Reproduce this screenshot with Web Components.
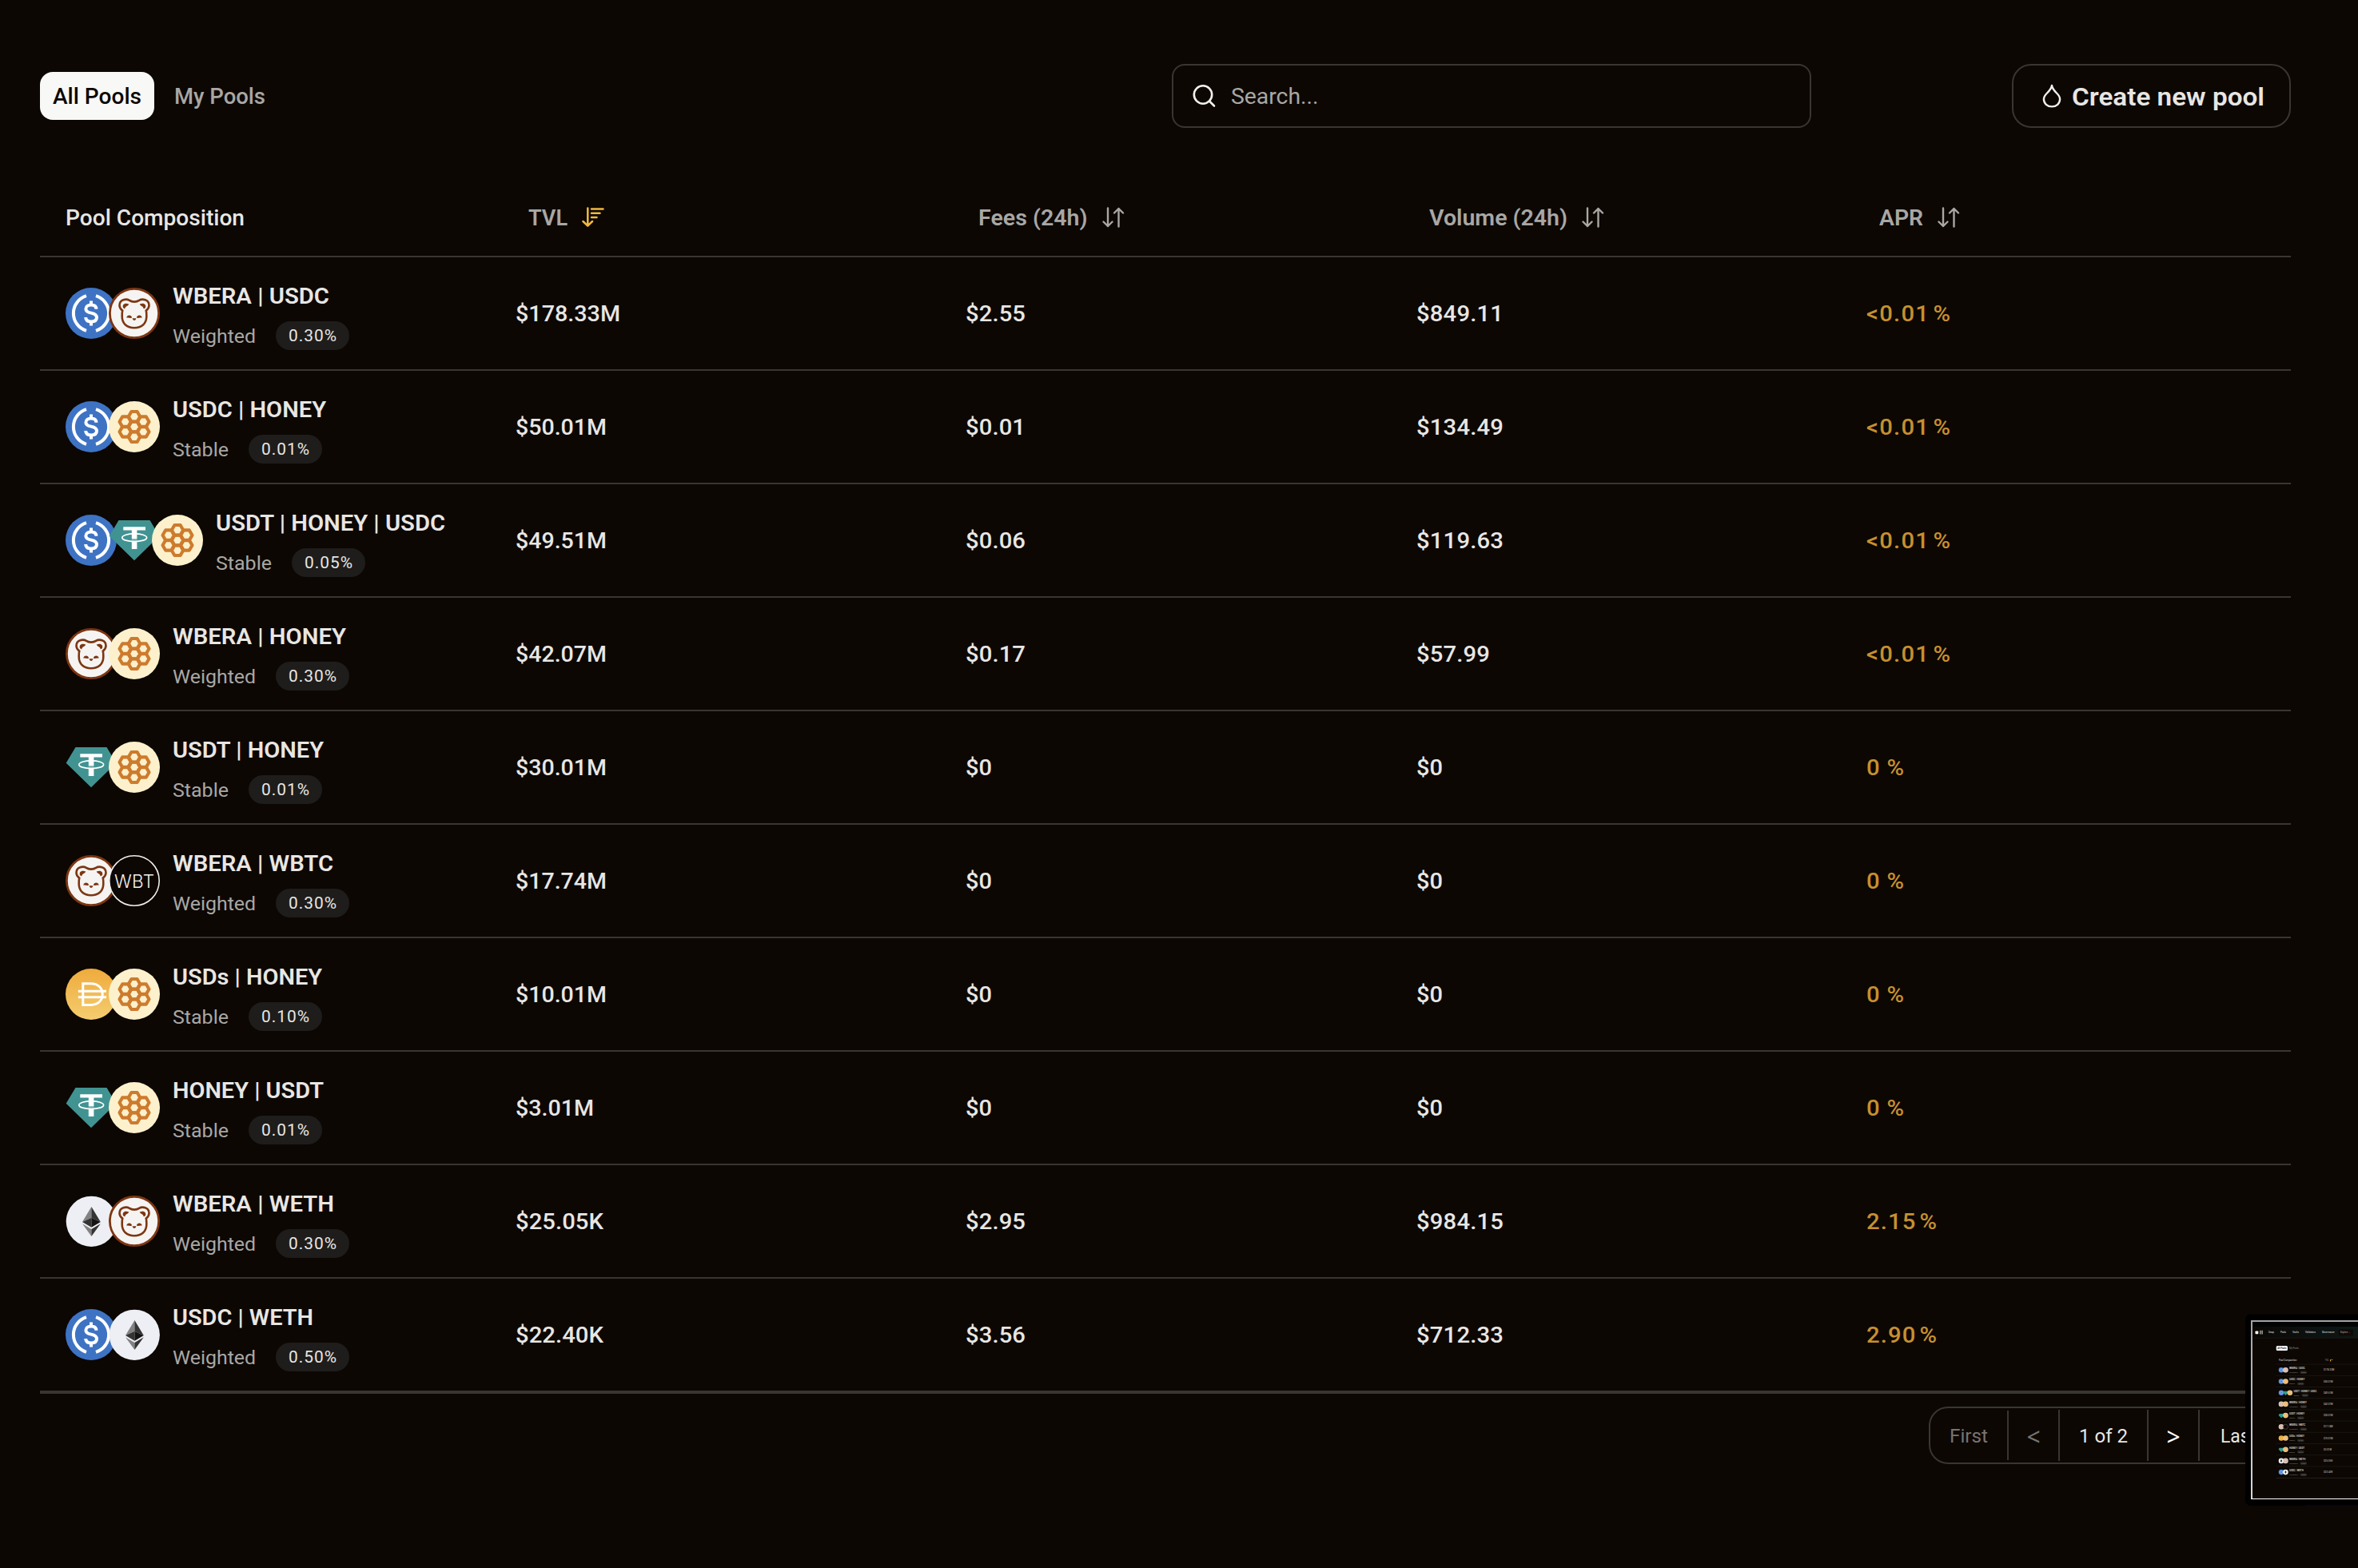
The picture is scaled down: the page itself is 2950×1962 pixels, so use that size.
<!DOCTYPE html>
<html lang="en">
<head>
<meta charset="utf-8">
<title>Pools</title>
<style>
  html, body { margin: 0; background: #0c0703; }
  body { width: 2950px; height: 1962px; overflow: hidden; font-family: Roboto, "Noto Sans", sans-serif; color: #e8e6e3; }
</style>
</head>
<body>
<pool-page></pool-page>
<script>
const fits = new Set();

/* Text widened slightly, then tracked, so that it spans a given width. */
class FitText extends HTMLElement {
  connectedCallback() {
    if (this.shadowRoot) return;
    this.attachShadow({ mode: 'open' }).innerHTML = `<style>:host{display:inline-block;white-space:nowrap;transform-origin:0 50%}</style><slot></slot>`;
    fits.add(this);
  }
  fit() {
    const w = parseFloat(this.getAttribute('w'));
    const n = this.textContent.length;
    const natural = this.getBoundingClientRect().width;
    const s = Math.min(1.06, Math.max(0.95, w / natural));
    const ls = (w / s - natural) / Math.max(1, n - 1);
    this.style.letterSpacing = ls.toFixed(3) + 'px';
    this.style.transform = `scaleX(${s.toFixed(4)})`;
    this.style.marginRight = (w - w / s - ls).toFixed(3) + 'px';
  }
}
customElements.define('fit-text', FitText);

function honeyCells() {
  const c = [[0,0],[0,-12.7],[0,12.7],[11.3,-6.35],[11.3,6.35],[-11.3,-6.35],[-11.3,6.35]];
  return c.map(([x, y]) => {
    const p = [];
    for (let i = 0; i < 6; i++) p.push((32 + x + 7.2 * Math.cos(i * Math.PI / 3)).toFixed(2) + ',' + (32 + y + 7.2 * Math.sin(i * Math.PI / 3)).toFixed(2));
    return `<polygon points="${p.join(' ')}"/>`;
  }).join('');
}
const ICONS = {
  usdc: `<circle cx="32" cy="32" r="32" fill="#3e73c4"/><g fill="none" stroke="#fff" stroke-width="4">
    <path d="M26 10.2A22.8 22.8 0 0 0 26 53.8M38 10.2A22.8 22.8 0 0 1 38 53.8"/>
    <path d="M38.4 26.8C38.3 23.4 35.8 21.6 32 21.6S25.4 23.4 25.4 26.4C25.4 29.6 28 30.8 32 31.6S39 34 39 37.3S36.3 42.4 32 42.4S25.3 40.4 25.2 37M32 16.5v5M32 42.4v5"/></g>`,
  honey: `<circle cx="32" cy="32" r="32" fill="#fcf1cc"/><g fill="none" stroke="#cd7b2e" stroke-width="4.1" stroke-linejoin="round">${honeyCells()}</g>`,
  bera: `<circle cx="32" cy="32" r="30.6" fill="#f5f4f2" stroke="#7d3612" stroke-width="2.8"/>
    <path d="M32 17.6C29.5 17.6 27.5 17 26 15.9C22 13.4 13.5 14.5 13.5 22C13.5 25 15 27 17.2 28.6C16.6 31 16.7 34 16.7 36C16.7 45 23 50.2 32 50.2S47.3 45 47.3 36C47.3 34 47.4 31 46.8 28.6C49 27 50.5 25 50.5 22C50.5 14.5 42 13.4 38 15.9C36.5 17 34.5 17.6 32 17.6Z" fill="none" stroke="#7d3612" stroke-width="2.6"/>
    <g fill="#7d3612"><path d="M18.2 25.2C16.2 21 20.5 18 25.2 20.6C25 22.8 20.8 23 20.2 26.4Z"/><path d="M45.8 25.2C47.8 21 43.5 18 38.8 20.6C39 22.8 43.2 23 43.8 26.4Z"/>
    <path d="M22.3 37.8C22.8 33.6 28.4 33.6 29.2 37.6C26.5 38.6 24.5 36.6 22.3 37.8Z"/><path d="M41.7 37.8C41.2 33.6 35.6 33.6 34.8 37.6C37.5 38.6 39.5 36.6 41.7 37.8Z"/>
    <path d="M29.6 38.2H34.4C34 40.2 33 40.9 32 40.9S30 40.2 29.6 38.2Z"/></g>`,
  usdt: `<path d="M12.5 7H51.5L63.3 26.7L32 57.3L.7 26.7Z" fill="#419392"/><path d="M18.3 15.3H46V19.4H35.4V43H28.8V19.4H18.3Z" fill="#fff"/>
    <path d="M28 33.8V30.2H36V33.8Z" fill="#419392" opacity=".75"/><ellipse cx="32.2" cy="28.7" rx="15.4" ry="4.9" fill="none" stroke="#fff" stroke-width="1.7"/>`,
  usds: `<defs><linearGradient id="g" x1="0" y1="0" x2="0" y2="1"><stop offset="0" stop-color="#efab3c"/><stop offset="1" stop-color="#f4cd70"/></linearGradient></defs>
    <circle cx="32" cy="32" r="32" fill="url(#g)"/><g fill="none" stroke="#fff" stroke-width="3"><path d="M21.8 18.7H31.5C41 18.7 46.2 24.5 46.2 32S41 45.4 31.5 45.4H21.8Z"/><path d="M15.8 28.3H51M15.8 35.7H51"/></g>`,
  weth: `<circle cx="32.3" cy="32.3" r="31.6" fill="#edeff4"/>
    <path d="M32.4 14L21 32.9L32.4 27.8Z" fill="#828282"/><path d="M32.4 14L43.8 32.9L32.4 27.8Z" fill="#343434"/>
    <path d="M21 32.9L32.4 27.8V39.7Z" fill="#343434"/><path d="M43.8 32.9L32.4 27.8V39.7Z" fill="#141414"/>
    <path d="M21 35.2L32.4 42V51Z" fill="#828282"/><path d="M43.8 35.2L32.4 42V51Z" fill="#343434"/>`,
  wbtc: `<circle cx="32" cy="32" r="31.2" fill="#0c0703" stroke="#f0eeeb" stroke-width="1.6"/><text x="32" y="40.6" text-anchor="middle" textLength="50" font-family="Inter" font-size="22.5" font-weight="300" fill="#f0eeeb">WBT</text>`
};

class TokenIcon extends HTMLElement {
  connectedCallback() {
    if (this.shadowRoot) return;
    this.attachShadow({ mode: 'open' }).innerHTML = `<style>:host{display:block;width:64px;height:64px;flex:none}svg{display:block}</style>
      <svg width="64" height="64" viewBox="0 0 64 64">${ICONS[this.getAttribute('name')]}</svg>`;
  }
}
customElements.define('token-icon', TokenIcon);

class PoolHeader extends HTMLElement {
  connectedCallback() {
    this.attachShadow({ mode: 'open' }).innerHTML = `<style>
      :host{display:flex;align-items:center;height:80px;font-size:28px;font-weight:500}
      .tab{box-sizing:border-box;height:60px;line-height:62px;border-radius:16px;padding:0 16px;color:#a9a7a4}
      .tab.on{width:143px;background:#f8f8f6;color:#0c0703;margin-right:8.5px}
      .search{box-sizing:border-box;width:800px;height:80px;border:2px solid #393532;border-radius:16px;margin:0 251px 0 auto;display:flex;align-items:center;padding-left:24px;gap:18.5px;color:#a9a7a4;font-weight:400}
      button{box-sizing:border-box;width:349px;height:80px;border:2px solid #393532;border-radius:24px;background:none;padding:0 0 0 35px;display:flex;align-items:center;gap:11.500px;color:#e8e6e3;font:600 31.5px Roboto,sans-serif}
      button fit-text{position:relative;top:1px}
      svg{flex:none;fill:none;stroke:#f2f0ed}
    </style>
    <div class="tab on"><fit-text w="111">All Pools</fit-text></div><div class="tab"><fit-text w="114">My Pools</fit-text></div>
    <div class="search"><svg width="29" height="30" viewBox="0 0 29 30" stroke-width="2.6"><circle cx="13" cy="13.5" r="11.2"/><path d="M21 21.5L27 27.5" stroke-linecap="round"/></svg><fit-text w="109.5">Search...</fit-text></div>
    <button><svg width="26" height="30" viewBox="0 0 26 30" stroke-width="2.4" stroke-linejoin="round"><path d="M13 2C12.3 6 10 8.500 7 11.500C4.500 14 2.900 16.200 2.900 19C2.900 24.500 7.300 28.400 13 28.400S23.100 24.500 23.100 19C23.100 16.200 21.500 14 19 11.500C16 8.500 13.700 6 13 2Z"/></svg><fit-text w="241">Create new pool</fit-text></button>`;
  }
}
customElements.define('pool-header', PoolHeader);

class SortHead extends HTMLElement {
  connectedCallback() {
    const active = this.hasAttribute('active');
    const icon = active
      ? `<svg width="28" height="26" viewBox="0 0 28 26" stroke="#efb93f" stroke-width="2.5"><path d="M7.3 1.5V23.5M1.5 18L7.3 23.7L13 18M12 2.5H26.500M12 7.8H22.500M12 13H18.500"/></svg>`
      : `<svg width="28" height="26" viewBox="0 0 28 26" stroke="#a9a7a4" stroke-width="2.4"><path d="M7 1.500V24M1.500 18.500L7 24L12.500 18.500M20.500 24.500V2M15 7.500L20.500 2L26 7.500"/></svg>`;
    this.attachShadow({ mode: 'open' }).innerHTML = `<style>:host{display:flex;align-items:center;gap:18px;padding-left:16px;color:#a9a7a4;font-weight:600}
      svg{flex:none;fill:none;stroke-linecap:round;stroke-linejoin:round}</style><slot></slot>${icon}`;
  }
}
customElements.define('sort-head', SortHead);

class PoolRow extends HTMLElement {
  set data(d) {
    const [tokens, name, nw, type, fee, tvl, tw, fees, fw, vol, vw, apr, aw] = d;
    this.attachShadow({ mode: 'open' }).innerHTML = `<style>
      :host{display:grid;grid-template-columns:repeat(5,minmax(0,1fr));align-items:center;height:140px;border-bottom:2px solid #393532;font-size:27.6px;font-weight:500}
      .cell{padding-left:32px;white-space:nowrap}
      .pool{display:flex;align-items:center}
      .icons{display:flex;margin-right:16px}
      token-icon + token-icon{margin-left:-10px}
      .name{height:48px;line-height:50px;font-weight:600;margin-bottom:8px}
      .sub{display:flex;height:36px;line-height:38px;gap:25px;color:#a9a7a4;font-size:23.6px;font-weight:400}
      .badge{box-sizing:border-box;width:92px;height:36px;border-radius:18px;background:#1e1d1b;color:#e8e6e3;font-size:19.7px;padding-left:16px}
      .apr{color:#c6902f}
    </style>
    <div class="cell pool"><div class="icons">${tokens.map(t => `<token-icon name="${t}"></token-icon>`).join('')}</div>
      <div><div class="name"><fit-text w="${nw + 1}">${name}</fit-text></div>
      <div class="sub"><fit-text w="${type === 'Stable' ? 70 : 104}">${type}</fit-text><div class="badge"><fit-text w="60">${fee}</fit-text></div></div></div></div>
    <div class="cell"><fit-text w="${tw}">${tvl}</fit-text></div>
    <div class="cell"><fit-text w="${fw}">${fees}</fit-text></div>
    <div class="cell"><fit-text w="${vw}">${vol}</fit-text></div>
    <div class="cell apr"><fit-text w="${aw}">${apr}</fit-text></div>`;
  }
}
customElements.define('pool-row', PoolRow);

const ROWS = [
  [['usdc','bera'],'WBERA | USDC',195,'Weighted','0.30%','$178.33M',131,'$2.55',75,'$849.11',109,'&lt;0.01\u200a%',105],
  [['usdc','honey'],'USDC | HONEY',191,'Stable','0.01%','$50.01M',114,'$0.01',75,'$134.49',109,'&lt;0.01\u200a%',105],
  [['usdc','usdt','honey'],'USDT | HONEY | USDC',286,'Stable','0.05%','$49.51M',114,'$0.06',75,'$119.63',109,'&lt;0.01\u200a%',105],
  [['bera','honey'],'WBERA | HONEY',216,'Weighted','0.30%','$42.07M',114,'$0.17',75,'$57.99',92,'&lt;0.01\u200a%',105],
  [['usdt','honey'],'USDT | HONEY',188,'Stable','0.01%','$30.01M',114,'$0',33,'$0',33,'0\u200a%',47],
  [['bera','wbtc'],'WBERA | WBTC',200,'Weighted','0.30%','$17.74M',114,'$0',33,'$0',33,'0\u200a%',47],
  [['usds','honey'],'USDs | HONEY',186,'Stable','0.10%','$10.01M',114,'$0',33,'$0',33,'0\u200a%',47],
  [['usdt','honey'],'HONEY | USDT',188,'Stable','0.01%','$3.01M',98,'$0',33,'$0',33,'0\u200a%',47],
  [['weth','bera'],'WBERA | WETH',201,'Weighted','0.30%','$25.05K',110,'$2.95',75,'$984.15',109,'2.15\u200a%',88],
  [['usdc','weth'],'USDC | WETH',175,'Weighted','0.50%','$22.40K',110,'$3.56',75,'$712.33',109,'2.90\u200a%',88]
];

class PoolTable extends HTMLElement {
  connectedCallback() {
    const root = this.attachShadow({ mode: 'open' });
    root.innerHTML = `<style>
      :host{display:block;border-bottom:2px solid #393532}
      .head{display:grid;grid-template-columns:repeat(5,minmax(0,1fr));height:96px;align-items:center;border-bottom:2px solid #393532;font-size:27.6px;font-weight:500}
      .head > *{margin-left:32px}
    </style>
    <div class="head"><div><fit-text w="224">Pool Composition</fit-text></div>
      <sort-head active><fit-text w="49">TVL</fit-text></sort-head><sort-head><fit-text w="136.5">Fees (24h)</fit-text></sort-head>
      <sort-head><fit-text w="173">Volume (24h)</fit-text></sort-head><sort-head><fit-text w="55">APR</fit-text></sort-head></div>
    <div class="rows"></div>`;
    for (const r of ROWS) {
      const el = document.createElement('pool-row');
      el.data = r;
      root.querySelector('.rows').append(el);
    }
  }
}
customElements.define('pool-table', PoolTable);

class PagerBar extends HTMLElement {
  connectedCallback() {
    this.attachShadow({ mode: 'open' }).innerHTML = `<style>
      :host{box-sizing:border-box;display:flex;align-items:center;width:453px;height:72px;border:2px solid #393532;border-radius:24px;font-size:23.8px}
      div{box-sizing:content-box;height:64px;line-height:66px;text-align:center;border-right:2px solid #393532}
      .first{width:96px;height:62px;line-height:64px;color:#777471}.prev{width:62px;color:#777471}.arrow{font-family:"Noto Sans",sans-serif;font-size:30px;line-height:67px}.now{width:109px}.next{width:62px;color:#fff}
      .last{border:0;padding-left:25.5px}
    </style><div class="first"><fit-text w="48">First</fit-text></div><div class="prev arrow">&lt;</div><div class="now"><fit-text w="61">1 of 2</fit-text></div><div class="next arrow">&gt;</div><div class="last"><fit-text w="44">Last</fit-text></div>`;
  }
}
customElements.define('pager-bar', PagerBar);

/* Floating preview of the captured window, partly off the right edge. */
class CapturePreview extends HTMLElement {
  connectedCallback() {
    const col = { usdc:'#4f86d6', honey:'#f0c987', bera:'#e3cdc0', usdt:'#2f9c93', usds:'#f0b545', weth:'#f3f3f5' };
    const rows = ROWS.map((r, i) => {
      const cy = 78.3 + i * 14.2;
      const off = 53.2 + r[0].length * 5.4;
      const icons = r[0].map((t, k) => {
        const x = 54 + k * 5.4;
        if (t === 'usdt') return `<path d="M${x - 2.4} ${cy - 2}h4.8l1 1.8l-3.4 3.4l-3.4-3.4Z" fill="${col.usdt}"/>`;
        if (t === 'wbtc') return `<circle cx="${x}" cy="${cy}" r="3" fill="#0c0703" stroke="#8a8784" stroke-width=".4"/>`;
        return `<circle cx="${x}" cy="${cy}" r="3.3" fill="${col[t]}"/>` + (t === 'weth' ? `<path d="M${x} ${cy - 2}l1.1 2l-1.1 2l-1.1-2Z" fill="#222"/>` : `<circle cx="${x}" cy="${cy}" r="1.7" fill="none" stroke="${t === 'usdc' ? '#b5cdf0' : t === 'bera' ? '#b98f7c' : '#dd9b4c'}" stroke-width=".5"/>`);
      }).join('');
      const w = r[3] === 'Stable' ? 7 : 10.5;
      return `<path d="M47.5 ${cy - 7.2}H150" stroke="#1f1b18" stroke-width=".7"/>${icons}
        <text x="${off}" y="${cy - 1.2}" textLength="${r[2] / 9.9}" font-size="2.9" font-weight="700" fill="#c9c7c4">${r[1]}</text>
        <text x="${off}" y="${cy + 3.9}" textLength="${w}" font-size="2.4" fill="#8a8784">${r[3]}</text>
        <rect x="${off + w + 3}" y="${cy + 1.3}" width="8.6" height="3.5" rx="1.7" fill="#292724"/><text x="${off + w + 4.7}" y="${cy + 3.9}" font-size="2.1" fill="#8a8784">${r[4]}</text>
        <text x="107" y="${cy + 1}" textLength="${r[6] / 9.8}" font-size="2.9" font-weight="500" fill="#b5b3b0">${r[5]}</text>`;
    }).join('');
    const nav = [['Swap',38,7],['Pools',53,7],['Vaults',68,8],['Validators',84,13],['Governance',105,15.5],['Explore ⌄',128,13]]
      .map(([t, x, w]) => `<text x="${x}" y="32.3" textLength="${w}" font-size="2.9" font-weight="600" fill="${x > 120 ? '#85827f' : '#bab8b5'}">${t}</text>`).join('');
    this.attachShadow({ mode: 'open' }).innerHTML = `<style>:host{position:absolute;left:2800px;top:1636px;width:150px;height:256px}svg{display:block;font-family:Roboto,sans-serif}</style>
    <svg width="150" height="256" viewBox="0 0 150 256">
      <defs><linearGradient id="n" x1="0" x2="1"><stop offset="0" stop-color="#0c0703"/><stop offset=".6" stop-color="#0b1211"/><stop offset="1" stop-color="#0e1816"/></linearGradient>
      <linearGradient id="s" x1="0" y1="0" x2="0" y2="1"><stop offset="0" stop-color="#a3a3a3"/><stop offset="1" stop-color="#d8d8d8"/></linearGradient></defs>
      <rect x="9" y="8.5" width="150" height="239.5" rx="7" fill="#000"/>
      <rect x="16" y="16" width="140" height="224" fill="url(#s)"/><rect x="16" y="239" width="134" height="1" fill="#fff"/>
      <rect x="18" y="18" width="132" height="221" fill="#0c0703"/><rect x="18" y="18" width="132" height="6" fill="#010404"/>
      <rect x="18" y="24" width="132" height="14" fill="url(#n)"/><path d="M18 38.3H150" stroke="#1c1c1a" stroke-width=".6"/>
      <rect x="125.5" y="27.2" width="18.5" height="8" rx="1" fill="#100a06"/>
      <rect x="21.5" y="29.5" width="3.8" height="3.8" rx=".8" fill="#fff"/><path d="M27 28.8h1.7v4.6H27zM29.3 28.8H31v4.6h-1.7z" fill="#8d8b89"/>${nav}
      <rect x="47.7" y="48" width="14.3" height="6" rx="1.5" fill="#f8f8f6"/><text x="49.2" y="52" textLength="11.2" font-size="2.9" font-weight="500" fill="#24201c">All Pools</text><text x="64" y="52" textLength="11.8" font-size="2.9" fill="#8a8784">My Pools</text>
      <text x="51" y="67.2" textLength="22.3" font-size="2.9" font-weight="500" fill="#bab8b5">Pool Composition</text><text x="108.7" y="67.2" textLength="4.8" font-size="2.9" fill="#8a8784">TVL</text><path d="M115.6 65v2.6M116.7 65.3h1.5" stroke="#efb93f" stroke-width=".9"/>
      ${rows}<path d="M47.5 213.4H150" stroke="#2a2623" stroke-width=".8"/><path d="M18 237.5H150" stroke="#1f1b18" stroke-width=".6"/>
      <path d="M84 247.8H150" stroke="#1b0526" stroke-width=".6"/>
    </svg>`;
  }
}
customElements.define('capture-preview', CapturePreview);

class PoolPage extends HTMLElement {
  connectedCallback() {
    this.attachShadow({ mode: 'open' }).innerHTML = `<style>
      :host{box-sizing:border-box;display:flex;flex-direction:column;position:relative;width:2950px;height:1962px;padding:80px 84px 0 50px;background:#0c0703;overflow:hidden}
      pool-table{margin:64px 0 16px}pager-bar{align-self:flex-end}
    </style><pool-header></pool-header><pool-table></pool-table><pager-bar></pager-bar><capture-preview></capture-preview>`;
    fits.forEach(f => f.fit());
  }
}
customElements.define('pool-page', PoolPage);
</script>
</body>
</html>
